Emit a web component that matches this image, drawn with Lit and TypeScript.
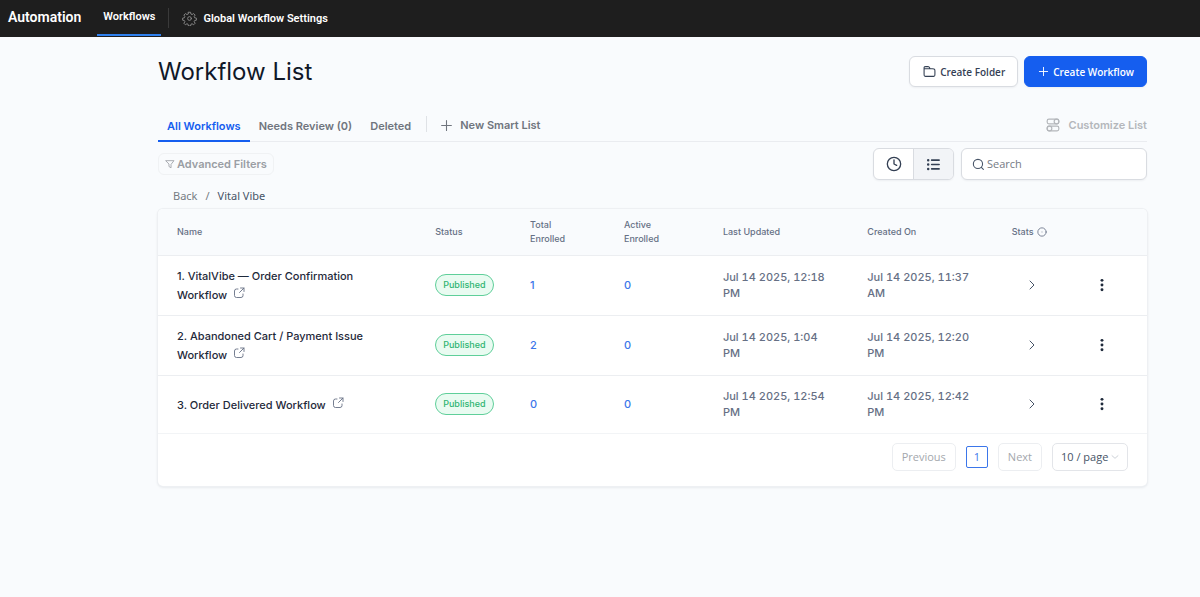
import { LitElement, html, css, svg } from "lit";
import { customElement, state } from "lit/decorators.js";
import { classMap } from "lit/directives/class-map.js";

interface Workflow {
  name: string;
  total: number;
  active: number;
  updated: string;
  created: string;
}

const WORKFLOWS: Workflow[] = [
  { name: "1. VitalVibe — Order Confirmation Workflow", total: 1, active: 0, updated: "Jul 14 2025, 12:18 PM", created: "Jul 14 2025, 11:37 AM" },
  { name: "2. Abandoned Cart / Payment Issue Workflow", total: 2, active: 0, updated: "Jul 14 2025, 1:04 PM", created: "Jul 14 2025, 12:20 PM" },
  { name: "3. Order Delivered Workflow", total: 0, active: 0, updated: "Jul 14 2025, 12:54 PM", created: "Jul 14 2025, 12:42 PM" },
];

const TABS = ["All Workflows", "Needs Review (0)", "Deleted"];

const icon = (size: number, body: unknown, width = 2) => html`<svg
  class="icon" width=${size} height=${size} viewBox="0 0 24 24" fill="none" stroke="currentColor"
  stroke-width=${width} stroke-linecap="round" stroke-linejoin="round" aria-hidden="true">${body}</svg>`;

const gear = svg`<circle cx="12" cy="12" r="3"/><path d="M10.3 2h3.4l.6 2.9 1.8.8 2.5-1.6 2.4 2.4-1.6 2.5.8 1.8 2.8.6v3.3l-2.8.6-.8 1.8 1.6 2.5-2.4 2.4-2.5-1.6-1.8.8-.6 2.8h-3.4l-.6-2.8-1.8-.8-2.5 1.6L3 19.6l1.6-2.5-.8-1.8-2.8-.6v-3.3l2.8-.6.8-1.8L3 6.500l2.400-2.400 2.500 1.600 1.800-.8z"/>`;
const folder = svg`<path d="M13 7l-1.100-2.200c-.3-.6-.5-1-.8-1.200a2 2 0 0 0-.7-.5C10 3 9.600 3 8.900 3H5.200c-1.100 0-1.700 0-2.100.2a2 2 0 0 0-.9.900C2 4.500 2 5.100 2 6.200V7m0 0h15.200c1.700 0 2.500 0 3.200.3a3 3 0 0 1 1.300 1.300c.3.700.3 1.500.3 3.200v4.400c0 1.700 0 2.500-.3 3.200a3 3 0 0 1-1.300 1.300c-.7.300-1.500.300-3.200.300H6.800c-1.700 0-2.500 0-3.200-.3a3 3 0 0 1-1.300-1.300C2 18.700 2 17.900 2 16.200z"/>`;
const plus = svg`<path d="M12 3v18M3 12h18"/>`;
const sliders = svg`<rect x="2" y="2" width="20" height="8" rx="3"/><circle cx="18" cy="6" r="4"/><rect x="2" y="14" width="20" height="8" rx="3"/><circle cx="6" cy="18" r="4"/>`;
const funnel = svg`<path d="M2.500 4h19l-7 9v8l-5-3v-5z"/>`;
const clock = svg`<circle cx="12" cy="12" r="10"/><path d="M12 6v6l4 2"/>`;
const list = svg`<path d="M9 5h12M9 12h12M9 19h12"/><path stroke-width="4" d="M3.500 5h.01M3.500 12h.01M3.500 19h.01"/>`;
const search = svg`<circle cx="11" cy="11" r="8.500"/><path d="M17.200 17.200L21 21"/>`;
const external = svg`<path d="M10 4H7a4 4 0 0 0-4 4v9a4 4 0 0 0 4 4h9a4 4 0 0 0 4-4v-3M15 2h7v7M22 2l-9 9"/>`;
const info = svg`<circle cx="12" cy="12" r="10"/><path d="M12 12v.01"/>`;
const chevron = svg`<path d="M8 4l8 8-8 8"/>`;
const chevronDown = svg`<path d="M3 8l9 8 9-8"/>`;
const dots = svg`<g fill="currentColor" stroke="none"><circle cx="12" cy="4" r="2.500"/><circle cx="12" cy="12" r="2.500"/><circle cx="12" cy="20" r="2.500"/></g>`;

@customElement("app-root")
export class AppRoot extends LitElement {
  @state() private tab = 0;
  @state() private query = "";

  static styles = css`
    :host {
      display: block;
      min-height: 100vh;
      background: #f9fbfd;
      color: #1f2a3b;
      font-family: Inter, "Liberation Sans", sans-serif;
      font-size: 11px;
    }
    * { box-sizing: border-box; }
    .icon { display: block; flex: none; }
    button, input, select { font: inherit; color: inherit; margin: 0; }
    button { display: flex; align-items: center; background: none; border: 0; padding: 0; cursor: pointer; }
    a { color: inherit; text-decoration: none; }

    .topbar {
      display: flex;
      align-items: stretch;
      height: 37px;
      padding: 0 8px;
      background: #1e1e1e;
      color: #fff;
      font-family: Roboto, sans-serif;
      font-weight: 600;
    }
    .brand { font-size: 14px; line-height: 34px; margin-right: 16px; }
    .nav { height: 36px; padding: 0 6px; line-height: 34px; border-bottom: 2px solid #2f80ed; }
    .rule { width: 1px; height: 20px; margin: 8px 13px 0 7px; background: #3a3a3a; }
    .settings { display: flex; align-items: center; gap: 6px; height: 36px; }
    .settings .icon { color: #8a8a8a; }

    .page { padding: 19px 53px 0 158px; }
    .heading { display: flex; align-items: center; gap: 6px; }
    h1 { flex: 1; margin: 0; font-size: 24px; line-height: 30px; font-weight: 400; color: #101828; }
    .btn {
      height: 31px;
      padding: 0 12px 0 13px;
      gap: 4px;
      border: 1px solid #d9dce1;
      border-radius: 6px;
      background: #fff;
      box-shadow: 0 1px 2px #1018280d;
      color: #344054;
      font-family: "Open Sans", sans-serif;
      font-size: 10px;
      font-weight: 600;
    }
    .primary { background: #155eef; border-color: #155eef; color: #fff; }

    .tabs { display: flex; align-items: stretch; height: 34px; margin-top: 21px; border-bottom: 1px solid #eaecf0; font-weight: 600; color: #70757e; }
    .tab { height: 34px; padding: 3px 9px 0; border-bottom: 2px solid transparent; }
    .tab.on { color: #155eef; border-color: #155eef; }
    .tabs .rule { height: 16px; margin: 8px 13px 0 6px; background: #dfe2e6; }
    .smart { gap: 7px; height: 34px; }
    .custom { gap: 9px; height: 34px; margin-left: auto; color: #b4b7bb; }

    .tools { display: flex; align-items: flex-start; padding-top: 6px; }
    .filters { height: 22px; margin-top: 5px; padding: 0 6px; gap: 2px; border: 1px solid #f0f2f4; border-radius: 6px; color: #9a9ea4; font-weight: 600; }
    .views { display: flex; margin-left: auto; border: 1px solid #d9dce1; border-radius: 6px; overflow: hidden; background: #fff; box-shadow: 0 1px 2px #1018280d; }
    .view { width: 39px; height: 30px; justify-content: center; color: #344054; }
    .view + .view { border-left: 1px solid #d9dce1; width: 40px; background: #f2f4f7; }
    .search { display: flex; align-items: center; gap: 2px; width: 186px; height: 32px; margin-left: 7px; padding: 0 10px; border: 1px solid #d9dce1; border-radius: 6px; background: #fff; box-shadow: 0 1px 2px #1018280d; color: #475467; }
    .search input { flex: 1; min-width: 0; border: 0; outline: 0; padding: 0 0 1px; background: none; font-family: "Open Sans", sans-serif; }
    .search input::placeholder { color: #757b85; opacity: 1; }

    .crumbs { display: flex; gap: 8px; padding: 8px 15px 5px; line-height: 16px; font-family: "Noto Sans", sans-serif; color: #767b83; }
    .crumbs b { font-weight: 400; color: #475467; }

    .card { background: #fff; border-radius: 5px; box-shadow: 0 0 0 1px #eef0f3, 0 1px 3px #10182824; overflow: hidden; }
    table { width: 100%; border-collapse: collapse; table-layout: fixed; }
    th, td { padding: 0 19px; text-align: left; border-bottom: 1px solid #eceef1; }
    th { height: 46px; background: #f9fbfd; color: #667085; font-size: 9px; line-height: 14px; font-weight: 500; }
    td { height: 60px; line-height: 16px; }
    tr:last-child td { height: 58px; border-color: #f2f4f6; }
    .c-name { width: 26.1%; }
    .c-status { width: 9.6%; }
    .c-total { width: 9.5%; }
    .c-active { width: 10%; }
    .c-date { width: 14.6%; }
    .c-stats { width: 6.6%; }
    .stats { display: flex; align-items: center; gap: 3px; }
    td.name { padding-top: 2px; font-weight: 500; line-height: 19px; }
    .name .icon { display: inline-block; margin-left: 3px; vertical-align: 0; color: #667085; }
    .badge { display: inline-block; padding: 0 7px; border: 1px solid #5fcf9a; border-radius: 11px; background: #e9fbf1; color: #2fb572; font-size: 9px; line-height: 20px; font-weight: 500; }
    .num { color: #3b76ea; font-weight: 500; }
    .date { color: #667085; font-weight: 500; font-variant-numeric: tabular-nums; }
    .go { margin-left: 14px; color: #475467; }
    .more { margin: 0 auto; color: #1f2a3b; }

    .pager { display: flex; justify-content: flex-end; align-items: center; gap: 10px; padding: 9px 19px 15px; font-family: "Open Sans", sans-serif; }
    .step { height: 28px; padding: 0 9px; border: 1px solid #eceef1; border-radius: 5px; color: #a3a7ad; }
    .current { height: 22px; width: 22px; justify-content: center; border: 1px solid #3b76ea; border-radius: 2px; color: #3b76ea; }
    .size { display: flex; align-items: center; height: 28px; padding: 0 8px; border: 1px solid #e3e5e9; border-radius: 5px; color: #475467; }
    .size select { appearance: none; border: 0; outline: 0; padding: 0; background: none; }
    .size .icon { color: #b4b9c2; margin-left: 2px; }
  `;

  private row(w: Workflow) {
    return html`<tr>
      <td class="name"><a href="#">${w.name} ${icon(12, external, 1.8)}</a></td>
      <td><span class="badge">Published</span></td>
      <td><a class="num" href="#">${w.total}</a></td>
      <td><a class="num" href="#">${w.active}</a></td>
      <td class="date">${w.updated}</td>
      <td class="date">${w.created}</td>
      <td><button class="go" aria-label="View stats">${icon(12, chevron)}</button></td>
      <td><button class="more" aria-label="More actions">${icon(14, dots)}</button></td>
    </tr>`;
  }

  render() {
    const rows = WORKFLOWS.filter((w) => w.name.toLowerCase().includes(this.query.toLowerCase()));
    return html`
      <header class="topbar">
        <span class="brand">Automation</span>
        <a class="nav" href="#">Workflows</a>
        <span class="rule"></span>
        <a class="settings" href="#">${icon(15, gear, 1.5)}Global Workflow Settings</a>
      </header>
      <main class="page">
        <div class="heading">
          <h1>Workflow List</h1>
          <button class="btn">${icon(13, folder)}Create Folder</button>
          <button class="btn primary">${icon(11, plus)}Create Workflow</button>
        </div>
        <div class="tabs">
          ${TABS.map((t, i) => html`<button class=${classMap({ tab: true, on: i === this.tab })} @click=${() => (this.tab = i)}>${t}</button>`)}
          <span class="rule"></span>
          <button class="smart">${icon(13, plus)}New Smart List</button>
          <button class="custom">${icon(14, sliders)}Customize List</button>
        </div>
        <div class="tools">
          <button class="filters">${icon(10, funnel)}Advanced Filters</button>
          <div class="views">
            <button class="view" aria-label="Recent">${icon(16, clock)}</button>
            <button class="view" aria-label="List">${icon(15, list, 2.5)}</button>
          </div>
          <label class="search">${icon(13, search)}<input type="text" aria-label="Search" placeholder="Search"
            @input=${(e: Event) => (this.query = (e.target as HTMLInputElement).value)} /></label>
        </div>
        <nav class="crumbs"><a href="#">Back</a><span>/</span><b>Vital Vibe</b></nav>
        <section class="card">
          <table>
            <thead><tr>
              <th class="c-name">Name</th><th class="c-status">Status</th>
              <th class="c-total">Total Enrolled</th><th class="c-active">Active Enrolled</th>
              <th class="c-date">Last Updated</th><th class="c-date">Created On</th>
              <th class="c-stats"><span class="stats">Stats ${icon(10, info)}</span></th>
              <th aria-label="Actions"></th>
            </tr></thead>
            <tbody>${rows.map((w) => this.row(w))}</tbody>
          </table>
          <div class="pager">
            <button class="step" disabled>Previous</button>
            <button class="current">1</button>
            <button class="step" disabled>Next</button>
            <label class="size"><select aria-label="Rows per page"><option>10 / page</option></select>${icon(8, chevronDown)}</label>
          </div>
        </section>
      </main>`;
  }
}
